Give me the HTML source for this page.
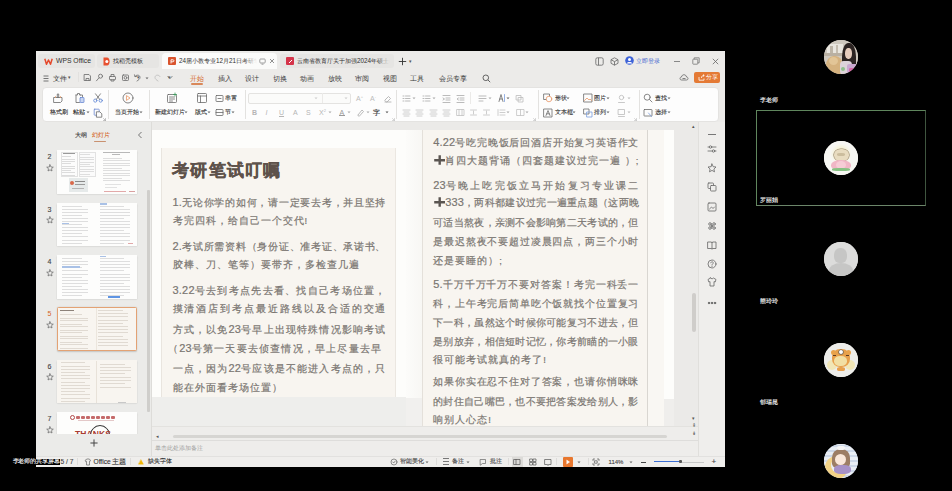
<!DOCTYPE html>
<html><head><meta charset="utf-8">
<style>
*{margin:0;padding:0;box-sizing:border-box}
html,body{width:952px;height:491px;overflow:hidden;background:#000;font-family:"Liberation Sans",sans-serif;}
.a{position:absolute}
#win{position:absolute;left:36px;top:51px;width:689px;height:416px;background:#ecebe9;overflow:hidden}
.t{position:absolute;white-space:nowrap;line-height:1}
.tab{position:absolute;top:3px;height:14px;border-radius:3px;background:#e6e5e3}
.tab .t{font-size:6.3px;color:#2e2e2e;top:4px}
.menu .t{font-size:6.5px;color:#3a3a3a;top:24.5px}
.rb{position:absolute;left:6px;top:36px;width:677px;height:35px;background:#fdfdfd;border-radius:4px;border:1px solid #e4e3e1}
.rl{font-size:6px;color:#333}
.ic{position:absolute;border:1px solid #555;border-radius:1px}
.sep{position:absolute;width:1px;background:#e2e1df}
/* slide */
#canvas{position:absolute;left:116px;top:71px;width:546px;height:318px;background:#ebeae8;overflow:hidden}
.page{position:absolute;background:#fcfbf8}
.card{position:absolute;background:#f8f5f0}
.ln{position:absolute;font-size:9.5px;line-height:1;color:#7a7571;-webkit-text-stroke:0.2px #7a7571;white-space:nowrap}
.j{text-align:justify;text-align-last:justify}
.ttl{position:absolute;font-size:16.5px;font-weight:bold;color:#5e524b;-webkit-text-stroke:0.35px #5e524b;white-space:nowrap;line-height:1;letter-spacing:1.3px}
.thumb{position:absolute;left:20px;width:80px;height:45px;background:#fbfaf8;box-shadow:0 0 1px rgba(0,0,0,.25)}
.num{position:absolute;left:11px;font-size:7px;color:#444}
.star{position:absolute;left:10px;font-size:8px;color:#555}
.rt{position:absolute;left:670px;font-size:8px;color:#555;line-height:1}
.sb .t{font-size:6px;color:#333;top:8px}
.av{position:absolute;width:34px;height:34px;border-radius:50%;overflow:hidden}
.nm{position:absolute;font-size:6px;color:#ddd;white-space:nowrap;line-height:1}
</style></head><body>

<div id="win">
  <!-- tab bar -->
  <div class="tab" style="left:2px;width:57px"><svg class="a" style="left:6px;top:3.5px" width="9" height="7" viewBox="0 0 9 7" fill="none" stroke="#e5482b" stroke-width="1.5" stroke-linejoin="round"><path d="M0.8 0.8 L2.5 6.2 L4.5 2 L6.5 6.2 L8.2 0.8"/></svg><span class="t" style="left:18px;top:3.6px;font-size:6.8px">WPS Office</span></div>
  <div class="tab" style="left:61px;width:62px"><svg class="a" style="left:6px;top:3px" width="8" height="9" viewBox="0 0 8 9"><path d="M0.5 0.5 H4 C7.5 0.5 7.5 8.5 4 8.5 H0.5z" fill="#e8502f"/><circle cx="3.8" cy="4.5" r="1.5" fill="#fff"/></svg><span class="t" style="left:16px">找稻壳模板</span></div>
  <div class="tab" style="left:126px;width:115px;background:#fbfbfa;border-radius:4px 4px 0 0;top:2px;height:16px"><span class="a" style="left:6px;top:4px;width:8px;height:8px;background:#d9532c;border-radius:1px"></span><svg class="a" style="left:8px;top:5.5px" width="5" height="5" viewBox="0 0 5 5"><path d="M1 4.5 V0.8 H3 C4.3 0.8 4.3 2.8 3 2.8 H1" fill="none" stroke="#fff" stroke-width="0.9"/></svg><div class="a" style="left:17px;top:4px;width:78px;height:9px;overflow:hidden"><span class="t" style="left:0;top:0.5px;font-size:6.3px;color:#2e2e2e">24届小教专业12月21日考研笔试叮嘱</span><div class="a" style="left:64px;top:0;width:14px;height:9px;background:linear-gradient(90deg,rgba(251,251,250,0),#fbfbfa)"></div></div><svg class="a" style="left:97px;top:5px" width="7" height="7" viewBox="0 0 7 7" fill="none" stroke="#888" stroke-width="0.8"><rect x="0.8" y="1" width="5.4" height="4" rx="0.8"/><path d="M2.5 6.2h2"/></svg><svg class="a" style="left:107px;top:5px" width="6" height="6" viewBox="0 0 6 6" fill="none" stroke="#777" stroke-width="0.8"><path d="M1 1L5 5M5 1L1 5"/></svg></div>
  <div class="tab" style="left:244px;width:114px"><span class="a" style="left:6px;top:3px;width:8px;height:8px;background:#d5344a;border-radius:1px"></span><svg class="a" style="left:7.5px;top:4.5px" width="5" height="5" viewBox="0 0 5 5"><path d="M1 4 L4 1" stroke="#fff" stroke-width="1"/></svg><div class="a" style="left:17px;top:3px;width:93px;height:9px;overflow:hidden"><span class="t" style="left:0;top:1px;font-size:6.3px;color:#2e2e2e">云南省教育厅关于加强2024年硕士研究生</span><div class="a" style="left:80px;top:0;width:13px;height:9px;background:linear-gradient(90deg,rgba(230,229,227,0),#e6e5e3)"></div></div></div>
  <svg class="a" style="left:362px;top:6px" width="9" height="9" viewBox="0 0 9 9" fill="none" stroke="#333" stroke-width="0.9"><path d="M4.5 0.8v7.4M0.8 4.5h7.4"/></svg>
  <span class="t" style="left:373px;top:8px;font-size:5px;color:#555">▾</span>

  <!-- window controls -->
  <svg class="a" style="left:558.5px;top:5.5px" width="9" height="9" viewBox="0 0 9 9" fill="none" stroke="#666" stroke-width="0.8"><rect x="0.8" y="0.8" width="7.4" height="7.4" rx="1.5"/><path d="M3.5 0.8v7.4"/></svg>
  <svg class="a" style="left:574px;top:5.5px" width="9" height="9" viewBox="0 0 9 9" fill="none" stroke="#666" stroke-width="0.8"><path d="M4.5 0.8 L8 2.7 V6.3 L4.5 8.2 L1 6.3 V2.7z M1 2.7 L4.5 4.6 L8 2.7 M4.5 4.6 V8.2"/></svg>
  <svg class="a" style="left:589px;top:5px" width="9" height="9" viewBox="0 0 9 9"><circle cx="4.5" cy="4.5" r="4.3" fill="#3e63d8"/><circle cx="4.5" cy="3.5" r="1.5" fill="#fff"/><path d="M1.8 7.4 C2.5 5.5 6.5 5.5 7.2 7.4" fill="#fff"/></svg>
  <span class="t" style="left:599.5px;top:6.8px;font-size:6.3px;color:#3b5fce">立即登录</span>
  <span class="a" style="left:638px;top:10px;width:6px;height:0.8px;background:#888"></span>
  <svg class="a" style="left:656px;top:6px" width="8" height="8" viewBox="0 0 8 8" fill="none" stroke="#777" stroke-width="0.8"><rect x="0.8" y="2.2" width="5" height="5" rx="0.6"/><path d="M2.2 2.2 V0.8 H7.2 V5.8 H5.8"/></svg>
  <svg class="a" style="left:675.5px;top:6.5px" width="7" height="7" viewBox="0 0 7 7" fill="none" stroke="#666" stroke-width="0.8"><path d="M0.8 0.8L6.2 6.2M6.2 0.8L0.8 6.2"/></svg>

  <!-- menu row -->
  <div class="menu">
    <svg class="a" style="left:7px;top:23.5px" width="6" height="7" viewBox="0 0 6 7" fill="none" stroke="#555" stroke-width="0.8"><path d="M0.5 1h5M0.5 3.5h5M0.5 6h5"/></svg>
    <span class="t" style="left:17px">文件</span><span class="t" style="left:32px;top:24px;font-size:5px;color:#555">▾</span>
    <span class="sep" style="left:42px;top:21px;height:10px"></span>
    <span class="t" style="left:101px;top:24px;font-size:5px;color:#555">▾</span>
    <span class="t" style="left:132px;top:24px;font-size:5px;color:#555">▾</span>
    <span class="t" style="left:154px;color:#d5651f">开始</span>
    <span class="a" style="left:154.6px;top:32px;width:12.5px;height:1.5px;background:#d9885a;border-radius:1px"></span>
    <span class="t" style="left:182px">插入</span>
    <span class="t" style="left:209px">设计</span>
    <span class="t" style="left:237px">切换</span>
    <span class="t" style="left:264px">动画</span>
    <span class="t" style="left:292px">放映</span>
    <span class="t" style="left:319px">审阅</span>
    <span class="t" style="left:347px">视图</span>
    <span class="t" style="left:374px">工具</span>
    <span class="t" style="left:403px">会员专享</span>
    <svg class="a" style="left:446px;top:22.5px" width="9" height="9" viewBox="0 0 9 9" fill="none" stroke="#555" stroke-width="0.9"><circle cx="3.8" cy="3.8" r="2.8"/><path d="M5.9 5.9 L8.2 8.2"/></svg>
    <svg class="a" style="left:643px;top:22px" width="10" height="8" viewBox="0 0 10 8" fill="none" stroke="#666" stroke-width="0.8"><path d="M2.5 7 C0.5 7 0.5 4 2.5 4 C2.8 1 7.2 1 7.5 4 C9.5 4 9.5 7 7.5 7z"/><path d="M3.5 5.5h3"/></svg>
    <div class="a" style="left:658px;top:20.8px;width:26px;height:11.5px;background:#e47a35;border-radius:2px"><svg class="a" style="left:3.5px;top:2.5px" width="7" height="7" viewBox="0 0 7 7" fill="none" stroke="#fff" stroke-width="0.8"><path d="M1 3 V6.2 H6 V4.5 M3.5 4 C3.5 2 4.5 1.5 6.2 1.5 M5 0.5 L6.2 1.5 L5 2.5"/></svg><span class="t" style="left:11.5px;top:2.6px;font-size:6.3px;color:#fff">分享</span></div>
  </div>

  <!-- ribbon -->
  <div class="rb" id="rb"></div>

  <!-- left panel -->
  <div id="lp" class="a" style="left:0;top:71px;width:115px;height:334px;background:#ebebe9">
    <span class="t" style="left:39px;top:11px;font-size:5.6px;color:#333;-webkit-text-stroke:0.1px #333">大纲</span>
    <span class="t" style="left:56.3px;top:11px;font-size:5.6px;color:#d5651f;-webkit-text-stroke:0.1px #d5651f">幻灯片</span>
    <span class="a" style="left:58px;top:18.5px;width:12px;height:1.3px;background:#c99170;border-radius:1px"></span>
    <svg class="a" style="left:101px;top:9px" width="6" height="8" viewBox="0 0 6 8" fill="none" stroke="#666" stroke-width="0.9"><path d="M4.5 1 L1.5 4 L4.5 7"/></svg>
    <span class="a" style="left:111px;top:68px;width:2.5px;height:222px;background:#cfcecb;border-radius:1px"></span>
    <span class="a" style="left:115px;top:0;width:1px;height:334px;background:#dddcd9"></span>
  </div>

  <!-- canvas -->
  <div id="canvas"></div>

  <!-- right toolbar -->
  <div id="rtb" class="a" style="left:662px;top:71px;width:27px;height:334px;background:#efeeec;border-left:1px solid #e0dfdc"></div>

  <!-- notes -->
  <div class="a" style="left:116px;top:389px;width:546px;height:16px;background:#eeedeb;border-top:1px solid #dedddb">
    <span class="t" style="left:3px;top:3.5px;font-size:6.4px;color:#9d9d9d">单击此处添加备注</span>
  </div>

  <!-- status bar -->
  <div class="sb a" style="left:0;top:405px;width:689px;height:11px;background:#efeeec;border-top:1px solid #e2e1df"></div>
</div>

<!-- slide layer (page coords) -->
<div class="a" style="left:152px;top:122px;width:546px;height:318px;overflow:hidden">
 <div class="a" style="left:-152px;top:-122px;width:952px;height:491px">
  <div class="a" style="left:152px;top:130px;width:522px;height:296px;background:#fdfdfb"></div>
  <div class="a" style="left:152px;top:397px;width:254px;height:29px;background:#eeeeec"></div>
  <div class="a" style="left:406px;top:130px;width:16px;height:296px;background:linear-gradient(90deg,#fcfcfa,#f8f7f4)"></div>
  <div class="a" style="left:406px;top:398px;width:16px;height:28px;background:#f1f0ee"></div>
  <div class="card" style="left:160.5px;top:148px;width:235.5px;height:249px;border-left:1px solid #e9e5df;border-right:1px solid #ebe7e1"></div>
  <div class="card" style="left:422px;top:130px;width:226px;height:296px;border-left:1px solid #e4e0da;border-right:1px solid #d9d6d1"></div>
  <div class="a" style="left:648px;top:130px;width:16px;height:296px;background:#f9f7f3"></div>
  <div class="a" style="left:664px;top:399px;width:10px;height:27px;background:#efeeec"></div>
  <div class="ttl" style="left:172px;top:162px">考研笔试叮嘱</div>
<div class="ln" style="left:172.5px;top:196.9px;letter-spacing:0.745px"><span style="font-size:11px;letter-spacing:0.2px">1.</span>无论你学的如何，请一定要去考，并且坚持</div>
<div class="ln" style="left:172.5px;top:215.6px;letter-spacing:1.000px">考完四科，给自己一个交代!</div>
<div class="ln" style="left:172.5px;top:241.0px;letter-spacing:0.745px"><span style="font-size:11px;letter-spacing:0.2px">2.</span>考试所需资料（身份证、准考证、承诺书、</div>
<div class="ln" style="left:172.5px;top:260.0px;letter-spacing:1.000px">胶棒、刀、笔等）要带齐，多检查几遍</div>
<div class="ln" style="left:172.5px;top:284.8px;letter-spacing:1.298px"><span style="font-size:11px;letter-spacing:0.2px">3.22</span>号去到考点先去看、找自己考场位置，</div>
<div class="ln" style="left:172.5px;top:304.3px;letter-spacing:1.940px">摸清酒店到考点最近路线以及合适的交通</div>
<div class="ln" style="left:172.5px;top:324.1px;letter-spacing:1.196px">方式，以免<span style="font-size:11px;letter-spacing:0.2px">23</span>号早上出现特殊情况影响考试</div>
<div class="ln" style="left:172.5px;top:342.7px;letter-spacing:1.197px"><span style="margin-left:-4.5px">（</span><span style="font-size:11px;letter-spacing:0.2px">23</span>号第一天要去侦查情况，早上尽量去早</div>
<div class="ln" style="left:172.5px;top:363.1px;letter-spacing:1.196px">一点，因为<span style="font-size:11px;letter-spacing:0.2px">22</span>号应该是不能进入考点的，只</div>
<div class="ln" style="left:172.5px;top:383.1px;letter-spacing:1.000px">能在外面看考场位置）</div>
<div class="ln" style="left:433.2px;top:137.0px;letter-spacing:0.811px"><span style="font-size:11px;letter-spacing:0.2px">4.22</span>号吃完晚饭后回酒店开始复习英语作文</div>
<div class="ln" style="left:433.2px;top:155.2px;letter-spacing:1.000px"><svg width="11.5" height="10" viewBox="0 0 11.5 10" style="vertical-align:-1.2px;margin-left:0.5px;position:relative;top:-0.5px"><path d="M0.2 5.2h11M5.7 0.2v9.6" stroke="#5a5551" stroke-width="2.4"/></svg>肖四大题背诵（四套题建议过完一遍 ）;</div>
<div class="ln" style="left:433.2px;top:179.5px;letter-spacing:2.170px"><span style="font-size:11px;letter-spacing:0.2px">23</span>号晚上吃完饭立马开始复习专业课二</div>
<div class="ln" style="left:433.2px;top:197.2px;letter-spacing:0.295px"><svg width="11.5" height="10" viewBox="0 0 11.5 10" style="vertical-align:-1.2px;margin-left:0.5px;position:relative;top:-0.5px"><path d="M0.2 5.2h11M5.7 0.2v9.6" stroke="#5a5551" stroke-width="2.4"/></svg><span style="font-size:11px;letter-spacing:0.2px">333</span>，两科都建议过完一遍重点题（这两晚</div>
<div class="ln" style="left:433.2px;top:217.5px;letter-spacing:0.273px">可适当熬夜，亲测不会影响第二天考试的，但</div>
<div class="ln" style="left:433.2px;top:236.5px;letter-spacing:0.844px">是最迟熬夜不要超过凌晨四点，两三个小时</div>
<div class="ln" style="left:433.2px;top:255.5px;letter-spacing:1.000px">还是要睡的）;</div>
<div class="ln" style="left:433.2px;top:279.4px;letter-spacing:0.919px"><span style="font-size:11px;letter-spacing:0.2px">5.</span>千万千万千万不要对答案！考完一科丢一</div>
<div class="ln" style="left:433.2px;top:298.5px;letter-spacing:0.844px">科，上午考完后简单吃个饭就找个位置复习</div>
<div class="ln" style="left:433.2px;top:317.5px;letter-spacing:0.273px">下一科，虽然这个时候你可能复习不进去，但</div>
<div class="ln" style="left:433.2px;top:336.5px;letter-spacing:0.273px">是别放弃，相信短时记忆，你考前瞄的一小眼</div>
<div class="ln" style="left:433.2px;top:354.5px;letter-spacing:1.000px">很可能考试就真的考了!</div>
<div class="ln" style="left:433.2px;top:377.1px;letter-spacing:0.844px">如果你实在忍不住对了答案，也请你悄咪咪</div>
<div class="ln" style="left:433.2px;top:396.5px;letter-spacing:0.273px">的封住自己嘴巴，也不要把答案发给别人，影</div>
<div class="ln" style="left:433.2px;top:415.2px;letter-spacing:1.000px">响别人心态!</div>
  <div class="a" style="left:152px;top:426px;width:546px;height:14px;background:#eeedeb;border-top:1px solid #e3e2df"></div>
  <div class="a" style="left:173px;top:435px;width:494px;height:3.2px;background:#d6d5d2;border-radius:2px"></div>
  <span class="t" style="left:156px;top:434px;font-size:5px;color:#555">◂</span>
  <span class="t" style="left:692px;top:124px;font-size:5px;color:#555">▴</span>
  <div class="a" style="left:692px;top:293px;width:4px;height:39px;background:#cfcdca;border-radius:2px"></div>
  <span class="t" style="left:692px;top:416px;font-size:5px;color:#555">▾</span>
  <span class="t" style="left:692px;top:423px;font-size:5px;color:#555">⇞</span>
  <span class="t" style="left:692px;top:431px;font-size:5px;color:#555">⇟</span>
 </div>
</div>

<!-- participants -->
<div class="a" style="left:756px;top:110.3px;width:170px;height:95.5px;border:1.5px solid #5f865d;border-right-color:#3f553f;border-bottom-color:#6c866a"></div>
<span class="nm" style="left:759.5px;top:97.4px;font-size:6px;color:#f4f4f4;-webkit-text-stroke:0.15px #f4f4f4">李老师</span>
<span class="nm" style="left:759.5px;top:197.2px;font-size:6px;color:#f4f4f4;-webkit-text-stroke:0.15px #f4f4f4">罗丽娟</span>
<span class="nm" style="left:759.5px;top:298.0px;font-size:6px;color:#f4f4f4;-webkit-text-stroke:0.15px #f4f4f4">熊玲玲</span>
<span class="nm" style="left:759.5px;top:399.0px;font-size:6px;color:#f4f4f4;-webkit-text-stroke:0.15px #f4f4f4">郁瑞昆</span>
<div class="av" style="left:823.5px;top:40.3px;width:34px;height:34px;background:#cfc9bf"><div class="a" style="left:0;top:0;width:34px;height:34px;filter:blur(0.7px)"><div class="a" style="left:-2px;top:-2px;width:38px;height:38px;background:#cfc9bf;border-radius:0;"></div><div class="a" style="left:3px;top:4px;width:16px;height:9px;background:#e9e6df;border-radius:0;"></div><div class="a" style="left:6px;top:6px;width:3px;height:7px;background:#bdb5a8;border-radius:0;"></div><div class="a" style="left:12px;top:5px;width:2px;height:8px;background:#c5bdb0;border-radius:0;"></div><div class="a" style="left:0px;top:13px;width:20px;height:3px;background:#b9b0a2;border-radius:0;"></div><div class="a" style="left:2px;top:16px;width:17px;height:20px;background:#d5b27f;border-radius:45% 45% 20% 20%;"></div><div class="a" style="left:5px;top:17px;width:9px;height:8px;background:#e2c597;border-radius:50%;"></div><div class="a" style="left:18px;top:3px;width:14px;height:30px;background:#2c2422;border-radius:45% 45% 20% 20%;"></div><div class="a" style="left:21px;top:8px;width:7px;height:11px;background:#e6cdbd;border-radius:45%;"></div><div class="a" style="left:16px;top:21px;width:12px;height:14px;background:#ddd3d9;border-radius:30%;"></div><div class="a" style="left:23px;top:24px;width:11px;height:10px;background:#c9a8cf;border-radius:20%;"></div><div class="a" style="left:25px;top:28px;width:8px;height:6px;background:#d666a6;border-radius:20%;"></div><div class="a" style="left:17px;top:27px;width:4px;height:4px;background:#8fc08c;border-radius:50%;"></div></div></div>
<div class="av" style="left:823.5px;top:141.3px;width:34px;height:34px;background:#f7f7f3"><div class="a" style="left:0;top:0;width:34px;height:34px;filter:blur(0.7px)"><div class="a" style="left:-2px;top:-2px;width:38px;height:38px;background:#f7f7f3;border-radius:0;"></div><div class="a" style="left:6px;top:3px;width:22px;height:20px;background:radial-gradient(circle,#f5edb0 0%,#f7f7f3 70%);border-radius:50%;"></div><div class="a" style="left:10px;top:8px;width:15px;height:12px;background:#e8dcc0;border-radius:45%;box-shadow:0 0 0 0.6px #9a8a70"></div><div class="a" style="left:13px;top:12px;width:8px;height:3px;background:#cbbd9d;border-radius:40%;"></div><div class="a" style="left:7px;top:19px;width:20px;height:10px;background:#f0b6c6;border-radius:50% 50% 40% 40%;"></div><div class="a" style="left:12px;top:20px;width:10px;height:8px;background:#f6ccd6;border-radius:50%;"></div><div class="a" style="left:8px;top:27px;width:18px;height:2.5px;background:#86c283;border-radius:40%;"></div></div></div>
<div class="av" style="left:823.5px;top:241.5px;width:34px;height:34px;background:#dcdcdb"><div class="a" style="left:0;top:0;width:34px;height:34px;filter:blur(0.7px)"><div class="a" style="left:-2px;top:-2px;width:38px;height:38px;background:#dcdcdb;border-radius:0;"></div><div class="a" style="left:10.5px;top:6px;width:13px;height:15px;background:#c6c6c5;border-radius:45% 45% 40% 40%;"></div><div class="a" style="left:5px;top:21px;width:24px;height:16px;background:#c6c6c5;border-radius:50% 50% 0 0;"></div></div></div>
<div class="av" style="left:823.5px;top:342.7px;width:34px;height:34px;background:#ededea"><div class="a" style="left:0;top:0;width:34px;height:34px;filter:blur(0.7px)"><div class="a" style="left:-2px;top:-2px;width:38px;height:38px;background:#ededea;border-radius:0;"></div><div class="a" style="left:3px;top:17px;width:10px;height:10px;background:#f1e6b6;border-radius:50%;"></div><div class="a" style="left:21px;top:17px;width:10px;height:10px;background:#f1e6b6;border-radius:50%;"></div><div class="a" style="left:8px;top:6px;width:18px;height:18px;background:#e7a04c;border-radius:45%;"></div><div class="a" style="left:7px;top:7px;width:5px;height:5px;background:#e9a24a;border-radius:50%;"></div><div class="a" style="left:22px;top:7px;width:5px;height:5px;background:#e9a24a;border-radius:50%;"></div><div class="a" style="left:10.5px;top:13.5px;width:13px;height:10px;background:#f2dfa3;border-radius:45%;"></div><div class="a" style="left:15px;top:7.5px;width:4px;height:4px;background:#fff;border-radius:50%;box-shadow:0 0 0 0.6px #555"></div><div class="a" style="left:9px;top:12px;width:3px;height:1px;background:#5a3a20;border-radius:0;"></div><div class="a" style="left:22px;top:12px;width:3px;height:1px;background:#5a3a20;border-radius:0;"></div><div class="a" style="left:13px;top:24px;width:8px;height:4px;background:#e7a04c;border-radius:40%;"></div></div></div>
<div class="av" style="left:823.5px;top:443.5px;width:34px;height:34px;background:#e3e9f2"><div class="a" style="left:0;top:0;width:34px;height:34px;filter:blur(0.7px)"><div class="a" style="left:-2px;top:-2px;width:38px;height:38px;background:repeating-linear-gradient(180deg,#e9eef5 0 3px,#cdd8e8 3px 5px);border-radius:0;"></div><div class="a" style="left:1px;top:12px;width:23px;height:23px;background:#f2d287;border-radius:50%;"></div><div class="a" style="left:7px;top:14px;width:15px;height:15px;background:#e9eef5;border-radius:50%;"></div><div class="a" style="left:8px;top:5px;width:18px;height:19px;background:#9d7e65;border-radius:45% 45% 25% 25%;"></div><div class="a" style="left:11.5px;top:10px;width:11px;height:11px;background:#fae8da;border-radius:50%;"></div><div class="a" style="left:10px;top:21px;width:17px;height:9px;background:#a792c8;border-radius:40%;"></div><div class="a" style="left:13px;top:2.5px;width:8px;height:3.5px;background:#f6f6f6;border-radius:2px;"></div></div></div>
<svg class="a" style="left:82.80px;top:73.20px" width="9" height="9" viewBox="0 0 9 9" fill="none" stroke="#6a6a6a" stroke-width="0.8" stroke-linecap="round" stroke-linejoin="round"><path d="M1.5 1.5h4.5l1.5 1.5v4.5h-6z"/><path d="M3 7.5v-2h3v2"/></svg>
<svg class="a" style="left:95.10px;top:73.20px" width="9" height="9" viewBox="0 0 9 9" fill="none" stroke="#6a6a6a" stroke-width="0.8" stroke-linecap="round" stroke-linejoin="round"><circle cx="5.5" cy="3.2" r="2"/><path d="M4 4.8 L1.5 7.8"/></svg>
<svg class="a" style="left:107.80px;top:73.20px" width="9" height="9" viewBox="0 0 9 9" fill="none" stroke="#6a6a6a" stroke-width="0.8" stroke-linecap="round" stroke-linejoin="round"><rect x="1.5" y="3.5" width="6" height="3.2" rx="0.6"/><path d="M3 3.5v-2h3v2M3 6.7v1.3h3v-1.3"/></svg>
<svg class="a" style="left:120.50px;top:73.20px" width="9" height="9" viewBox="0 0 9 9" fill="none" stroke="#6a6a6a" stroke-width="0.8" stroke-linecap="round" stroke-linejoin="round"><rect x="1.5" y="2" width="6" height="5.5" rx="0.8"/><circle cx="4.5" cy="4.8" r="1.4"/></svg>
<svg class="a" style="left:133.20px;top:73.20px" width="9" height="9" viewBox="0 0 9 9" fill="none" stroke="#6a6a6a" stroke-width="0.8" stroke-linecap="round" stroke-linejoin="round"><path d="M2 3.5 C3 1.5 7 1.5 7 4.5 C7 6 5.5 7 4 8"/><path d="M1.5 1.8 L2 3.7 L3.8 3.3"/></svg>
<svg class="a" style="left:144.50px;top:76.50px" width="4" height="3" viewBox="0 0 4 3"><path d="M0.5 0.5 L3.5 0.5 L2 2.3z" fill="#666"/></svg>
<svg class="a" style="left:152.80px;top:73.20px" width="9" height="9" viewBox="0 0 9 9" fill="none" stroke="#bbb" stroke-width="0.8" stroke-linecap="round" stroke-linejoin="round"><path d="M7 3.5 C6 1.5 2 1.5 2 4.5 C2 6 3.5 7 5 8"/></svg>
<svg class="a" style="left:167.00px;top:75.20px" width="6" height="5" viewBox="0 0 6 5" fill="none" stroke="#666" stroke-width="0.9" stroke-linecap="round" stroke-linejoin="round"><path d="M1 1.5 L3 3.5 L5 1.5"/></svg>
<svg class="a" style="left:52.00px;top:92.00px" width="12" height="12" viewBox="0 0 12 12" fill="none" stroke="#6a6a6a" stroke-width="0.8" stroke-linecap="round" stroke-linejoin="round"><path d="M2 5.5 H10 V9 L8.5 10.5 H2z"/><path d="M5.3 5.5 V2 H6.7 V5.5"/><path d="M3.5 5.5 V4.5 M8.5 5.5 V4.5" stroke="#e8a070"/></svg>
<span class="t" style="left:50px;top:109.70px;font-size:5.8px;color:#333;-webkit-text-stroke:0.12px #333;">格式刷</span>
<svg class="a" style="left:74.00px;top:92.00px" width="12" height="12" viewBox="0 0 12 12" fill="none" stroke="#6a6a6a" stroke-width="0.8" stroke-linecap="round" stroke-linejoin="round"><path d="M6.5 3 H8.5 V5 M2 3 V10.5 H5.5"/><path d="M2 3 H3.5 V1.5 H5.5 V3 H6.5"/><rect x="6" y="5.5" width="4" height="5" rx="0.5" fill="#c9d6f2" stroke="#6a88d0"/></svg>
<span class="t" style="left:73px;top:109.70px;font-size:5.8px;color:#333;-webkit-text-stroke:0.12px #333;">粘贴</span>
<svg class="a" style="left:85.50px;top:111.40px" width="4" height="3" viewBox="0 0 4 3"><path d="M0.5 0.5 L3.5 0.5 L2 2.3z" fill="#666"/></svg>
<svg class="a" style="left:93.00px;top:93.00px" width="10" height="10" viewBox="0 0 10 10" fill="none" stroke="#6a6a6a" stroke-width="0.8" stroke-linecap="round" stroke-linejoin="round"><circle cx="2.3" cy="7.6" r="1.6" stroke="#5f86d6"/><circle cx="7.7" cy="7.6" r="1.6" stroke="#5f86d6"/><path d="M3.3 6.4 L7.5 0.8M6.7 6.4 L2.5 0.8"/></svg>
<svg class="a" style="left:93.00px;top:107.60px" width="10" height="10" viewBox="0 0 10 10" fill="none" stroke="#6a6a6a" stroke-width="0.8" stroke-linecap="round" stroke-linejoin="round"><rect x="1.2" y="1.2" width="5" height="6" rx="0.5" stroke="#6a88d0"/><path d="M3.8 3.8 H6.8 L8.8 5.8 V9.2 H3.8z" fill="#fdfdfd"/></svg>
<svg class="a" style="left:103.10px;top:117.80px" width="3" height="3" viewBox="0 0 3 3" fill="none" stroke="#999" stroke-width="0.6" stroke-linecap="round" stroke-linejoin="round"><path d="M0.5 0.5 L2.5 2.5 M2.5 0.5v2h-2"/></svg>
<div class="a" style="left:107.5px;top:90px;width:1px;height:29px;background:#e3e2e0"></div>
<svg class="a" style="left:121.70px;top:92.00px" width="12" height="12" viewBox="0 0 12 12" fill="none" stroke="#6a6a6a" stroke-width="0.8" stroke-linecap="round" stroke-linejoin="round"><circle cx="6" cy="6" r="5" stroke="#666"/><path d="M4.8 3.8 L8 6 L4.8 8.2z" stroke="#e89868"/></svg>
<span class="t" style="left:114.5px;top:109.70px;font-size:5.8px;color:#333;-webkit-text-stroke:0.12px #333;">当页开始</span>
<svg class="a" style="left:139.00px;top:111.40px" width="4" height="3" viewBox="0 0 4 3"><path d="M0.5 0.5 L3.5 0.5 L2 2.3z" fill="#666"/></svg>
<div class="a" style="left:149px;top:90px;width:1px;height:29px;background:#e3e2e0"></div>
<svg class="a" style="left:166.00px;top:92.00px" width="12" height="12" viewBox="0 0 12 12" fill="none" stroke="#6a6a6a" stroke-width="0.8" stroke-linecap="round" stroke-linejoin="round"><rect x="1.5" y="2.5" width="9" height="8" rx="0.8"/><path d="M3.5 5h5M3.5 7h5M3.5 9h3"/><path d="M9 1v3M7.5 2.5h3" stroke="#3b9a5a"/></svg>
<span class="t" style="left:155px;top:109.70px;font-size:5.8px;color:#333;-webkit-text-stroke:0.12px #333;">新建幻灯片</span>
<svg class="a" style="left:184.00px;top:111.40px" width="4" height="3" viewBox="0 0 4 3"><path d="M0.5 0.5 L3.5 0.5 L2 2.3z" fill="#666"/></svg>
<svg class="a" style="left:196.00px;top:92.00px" width="12" height="12" viewBox="0 0 12 12" fill="none" stroke="#6a6a6a" stroke-width="0.8" stroke-linecap="round" stroke-linejoin="round"><rect x="1.5" y="1.5" width="9" height="9" rx="0.8"/><path d="M1.5 4h9M4.5 4v6.5"/></svg>
<span class="t" style="left:194.5px;top:109.70px;font-size:5.8px;color:#333;-webkit-text-stroke:0.12px #333;">版式</span>
<svg class="a" style="left:206.50px;top:111.40px" width="4" height="3" viewBox="0 0 4 3"><path d="M0.5 0.5 L3.5 0.5 L2 2.3z" fill="#666"/></svg>
<svg class="a" style="left:214.50px;top:93.50px" width="9" height="9" viewBox="0 0 9 9" fill="none" stroke="#6a6a6a" stroke-width="0.8" stroke-linecap="round" stroke-linejoin="round"><rect x="1" y="1.5" width="7" height="6" rx="0.6"/><path d="M3 4.5h3"/></svg>
<span class="t" style="left:224.5px;top:96.40px;font-size:5.8px;color:#333;-webkit-text-stroke:0.12px #333;">串置</span>
<svg class="a" style="left:214.50px;top:108.10px" width="9" height="9" viewBox="0 0 9 9" fill="none" stroke="#6a6a6a" stroke-width="0.8" stroke-linecap="round" stroke-linejoin="round"><rect x="1" y="1.5" width="7" height="6" rx="0.6"/><path d="M1 4.5h7"/></svg>
<span class="t" style="left:225px;top:109.70px;font-size:5.8px;color:#333;-webkit-text-stroke:0.12px #333;">节</span>
<svg class="a" style="left:231.00px;top:111.40px" width="4" height="3" viewBox="0 0 4 3"><path d="M0.5 0.5 L3.5 0.5 L2 2.3z" fill="#666"/></svg>
<div class="a" style="left:245px;top:90px;width:1px;height:29px;background:#e3e2e0"></div>
<div class="a" style="left:248px;top:92.5px;width:102.5px;height:11px;border:1px solid #e4e3e1;border-radius:2px;background:#fbfbfa"></div>
<div class="a" style="left:322px;top:93px;width:1px;height:10px;background:#ebeae8"></div>
<svg class="a" style="left:314.00px;top:96.80px" width="4" height="3" viewBox="0 0 4 3"><path d="M0.5 0.5 L3.5 0.5 L2 2.3z" fill="#ccc"/></svg>
<svg class="a" style="left:344.00px;top:96.80px" width="4" height="3" viewBox="0 0 4 3"><path d="M0.5 0.5 L3.5 0.5 L2 2.3z" fill="#ccc"/></svg>
<span class="t" style="left:356px;top:94.50px;font-size:7px;color:#bbb;">A<sup style="font-size:4px">+</sup></span>
<span class="t" style="left:370px;top:94.50px;font-size:7px;color:#bbb;">A<sup style="font-size:4px">-</sup></span>
<svg class="a" style="left:382.50px;top:93.50px" width="9" height="9" viewBox="0 0 9 9" fill="none" stroke="#aaa" stroke-width="0.8" stroke-linecap="round" stroke-linejoin="round"><path d="M2 6 L5.5 2.5 L7.5 4.5 L4 8z"/><path d="M2 8h6"/></svg>
<span class="t" style="left:252px;top:109.10px;font-size:7px;color:#b5b5b5;"><b>B</b></span>
<span class="t" style="left:265.5px;top:109.10px;font-size:7px;color:#b5b5b5;"><i>I</i></span>
<span class="t" style="left:279px;top:109.10px;font-size:7px;color:#b5b5b5;"><u>U</u></span>
<span class="t" style="left:293px;top:109.10px;font-size:7px;color:#b5b5b5;">A</span>
<span class="t" style="left:306px;top:109.10px;font-size:7px;color:#b5b5b5;">S</span>
<span class="t" style="left:319px;top:109.10px;font-size:7px;color:#b5b5b5;">X<sup style="font-size:4px">2</sup></span>
<svg class="a" style="left:328.00px;top:111.40px" width="4" height="3" viewBox="0 0 4 3"><path d="M0.5 0.5 L3.5 0.5 L2 2.3z" fill="#aaa"/></svg>
<span class="t" style="left:339.5px;top:109.10px;font-size:7px;color:#999;">A</span>
<div class="a" style="left:339px;top:115px;width:6px;height:1px;background:#999"></div>
<svg class="a" style="left:347.00px;top:111.40px" width="4" height="3" viewBox="0 0 4 3"><path d="M0.5 0.5 L3.5 0.5 L2 2.3z" fill="#aaa"/></svg>
<svg class="a" style="left:355.50px;top:108.10px" width="9" height="9" viewBox="0 0 9 9" fill="none" stroke="#aaa" stroke-width="0.8" stroke-linecap="round" stroke-linejoin="round"><path d="M2 7 L6 2 L7.5 3.5 L3.5 8z"/></svg>
<svg class="a" style="left:366.00px;top:111.40px" width="4" height="3" viewBox="0 0 4 3"><path d="M0.5 0.5 L3.5 0.5 L2 2.3z" fill="#aaa"/></svg>
<span class="t" style="left:373px;top:109.10px;font-size:7px;color:#555;"><b>字</b></span>
<svg class="a" style="left:385.00px;top:111.40px" width="4" height="3" viewBox="0 0 4 3"><path d="M0.5 0.5 L3.5 0.5 L2 2.3z" fill="#555"/></svg>
<svg class="a" style="left:391.50px;top:117.80px" width="3" height="3" viewBox="0 0 3 3" fill="none" stroke="#bbb" stroke-width="0.6" stroke-linecap="round" stroke-linejoin="round"><path d="M0.5 0.5 L2.5 2.5 M2.5 0.5v2h-2"/></svg>
<div class="a" style="left:396px;top:90px;width:1px;height:29px;background:#e3e2e0"></div>
<svg class="a" style="left:402.20px;top:93.50px" width="9" height="9" viewBox="0 0 9 9" fill="none" stroke="#aaa" stroke-width="0.8" stroke-linecap="round" stroke-linejoin="round"><path d="M1 2h1M3.5 2h4.5M1 4.5h1M3.5 4.5h4.5M1 7h1M3.5 7h4.5"/></svg>
<svg class="a" style="left:412.00px;top:96.80px" width="4" height="3" viewBox="0 0 4 3"><path d="M0.5 0.5 L3.5 0.5 L2 2.3z" fill="#aaa"/></svg>
<svg class="a" style="left:422.10px;top:93.50px" width="9" height="9" viewBox="0 0 9 9" fill="none" stroke="#aaa" stroke-width="0.8" stroke-linecap="round" stroke-linejoin="round"><path d="M1 2h1M3.5 2h4.5M1 4.5h1M3.5 4.5h4.5M1 7h1M3.5 7h4.5"/></svg>
<svg class="a" style="left:432.00px;top:96.80px" width="4" height="3" viewBox="0 0 4 3"><path d="M0.5 0.5 L3.5 0.5 L2 2.3z" fill="#aaa"/></svg>
<svg class="a" style="left:441.50px;top:93.50px" width="9" height="9" viewBox="0 0 9 9" fill="none" stroke="#aaa" stroke-width="0.8" stroke-linecap="round" stroke-linejoin="round"><path d="M1 1.5h7M4 4h4M4 6h4M1 8.5h7M1 4l1.5 1-1.5 1"/></svg>
<svg class="a" style="left:455.50px;top:93.50px" width="9" height="9" viewBox="0 0 9 9" fill="none" stroke="#aaa" stroke-width="0.8" stroke-linecap="round" stroke-linejoin="round"><path d="M1 1.5h7M4 4h4M4 6h4M1 8.5h7M2.5 4l-1.5 1 1.5 1"/></svg>
<div class="a" style="left:470px;top:92px;width:1px;height:12px;background:#ebeae8"></div>
<svg class="a" style="left:477.50px;top:93.50px" width="9" height="9" viewBox="0 0 9 9" fill="none" stroke="#aaa" stroke-width="0.8" stroke-linecap="round" stroke-linejoin="round"><path d="M1 2h7M1 4.5h7M1 7h4"/></svg>
<svg class="a" style="left:488.00px;top:96.80px" width="4" height="3" viewBox="0 0 4 3"><path d="M0.5 0.5 L3.5 0.5 L2 2.3z" fill="#aaa"/></svg>
<svg class="a" style="left:496.50px;top:93.00px" width="9" height="10" viewBox="0 0 9 10" fill="none" stroke="#666" stroke-width="0.8" stroke-linecap="round" stroke-linejoin="round"><path d="M2 8.5 L4 1.5 L6 8.5M2.8 6h2.4"/><path d="M7.5 1.5v7" stroke="#7b9ede"/></svg>
<svg class="a" style="left:506.00px;top:96.80px" width="4" height="3" viewBox="0 0 4 3"><path d="M0.5 0.5 L3.5 0.5 L2 2.3z" fill="#666"/></svg>
<svg class="a" style="left:514.90px;top:93.50px" width="9" height="9" viewBox="0 0 9 9" fill="none" stroke="#bbb" stroke-width="0.8" stroke-linecap="round" stroke-linejoin="round"><rect x="1.5" y="1.5" width="4.5" height="4.5"/><rect x="3.5" y="3.5" width="4.5" height="4.5"/></svg>
<svg class="a" style="left:401.50px;top:108.10px" width="9" height="9" viewBox="0 0 9 9" fill="none" stroke="#c2c2c2" stroke-width="0.8" stroke-linecap="round" stroke-linejoin="round"><path d="M1 2h7M2 4h5M1 6h7M2 8h5"/></svg>
<svg class="a" style="left:415.00px;top:108.10px" width="9" height="9" viewBox="0 0 9 9" fill="none" stroke="#c2c2c2" stroke-width="0.8" stroke-linecap="round" stroke-linejoin="round"><path d="M1 2h7M2 4h5M1 6h7M2 8h5"/></svg>
<svg class="a" style="left:428.50px;top:108.10px" width="9" height="9" viewBox="0 0 9 9" fill="none" stroke="#c2c2c2" stroke-width="0.8" stroke-linecap="round" stroke-linejoin="round"><path d="M1 2h7M2 4h5M1 6h7M2 8h5"/></svg>
<svg class="a" style="left:442.00px;top:108.10px" width="9" height="9" viewBox="0 0 9 9" fill="none" stroke="#c2c2c2" stroke-width="0.8" stroke-linecap="round" stroke-linejoin="round"><path d="M1 2h7M2 4h5M1 6h7M2 8h5"/></svg>
<svg class="a" style="left:455.50px;top:108.10px" width="9" height="9" viewBox="0 0 9 9" fill="none" stroke="#c2c2c2" stroke-width="0.8" stroke-linecap="round" stroke-linejoin="round"><rect x="1" y="1.5" width="7" height="6"/><path d="M3 1.5v6M6 1.5v6"/></svg>
<svg class="a" style="left:468.50px;top:108.10px" width="9" height="9" viewBox="0 0 9 9" fill="none" stroke="#c2c2c2" stroke-width="0.8" stroke-linecap="round" stroke-linejoin="round"><path d="M1.5 2h6M1.5 7h6M4.5 3v3"/></svg>
<svg class="a" style="left:482.10px;top:108.10px" width="9" height="9" viewBox="0 0 9 9" fill="none" stroke="#c2c2c2" stroke-width="0.8" stroke-linecap="round" stroke-linejoin="round"><path d="M1.5 2h6M1.5 7h6M4.5 3v3"/></svg>
<svg class="a" style="left:496.50px;top:108.10px" width="9" height="9" viewBox="0 0 9 9" fill="none" stroke="#c2c2c2" stroke-width="0.8" stroke-linecap="round" stroke-linejoin="round"><path d="M1 1.5v6M3 2h5M3 4.5h5M3 7h5"/></svg>
<svg class="a" style="left:506.00px;top:111.40px" width="4" height="3" viewBox="0 0 4 3"><path d="M0.5 0.5 L3.5 0.5 L2 2.3z" fill="#aaa"/></svg>
<svg class="a" style="left:516.20px;top:108.10px" width="9" height="9" viewBox="0 0 9 9" fill="none" stroke="#c2c2c2" stroke-width="0.8" stroke-linecap="round" stroke-linejoin="round"><rect x="1" y="1.5" width="7" height="6"/><path d="M4.5 1.5v6"/></svg>
<svg class="a" style="left:525.00px;top:111.40px" width="4" height="3" viewBox="0 0 4 3"><path d="M0.5 0.5 L3.5 0.5 L2 2.3z" fill="#aaa"/></svg>
<svg class="a" style="left:532.50px;top:117.80px" width="3" height="3" viewBox="0 0 3 3" fill="none" stroke="#bbb" stroke-width="0.6" stroke-linecap="round" stroke-linejoin="round"><path d="M0.5 0.5 L2.5 2.5 M2.5 0.5v2h-2"/></svg>
<div class="a" style="left:538px;top:90px;width:1px;height:29px;background:#e3e2e0"></div>
<svg class="a" style="left:543.30px;top:93.00px" width="10" height="10" viewBox="0 0 10 10" fill="none" stroke="#6a6a6a" stroke-width="0.8" stroke-linecap="round" stroke-linejoin="round"><rect x="1" y="1" width="5.5" height="5.5"/><circle cx="6" cy="6" r="2.8" fill="#fdfdfd" stroke="#e89868"/></svg>
<span class="t" style="left:554.5px;top:96.40px;font-size:5.8px;color:#333;-webkit-text-stroke:0.12px #333;">形状</span>
<svg class="a" style="left:566.00px;top:96.80px" width="4" height="3" viewBox="0 0 4 3"><path d="M0.5 0.5 L3.5 0.5 L2 2.3z" fill="#666"/></svg>
<svg class="a" style="left:543.30px;top:107.60px" width="10" height="10" viewBox="0 0 10 10" fill="none" stroke="#6a6a6a" stroke-width="0.8" stroke-linecap="round" stroke-linejoin="round"><rect x="1" y="1" width="8" height="8"/><path d="M3 7.5 L5 2.5 L7 7.5M3.8 5.8h2.4"/></svg>
<span class="t" style="left:554.5px;top:109.70px;font-size:5.8px;color:#333;-webkit-text-stroke:0.12px #333;">文本框</span>
<svg class="a" style="left:572.00px;top:111.40px" width="4" height="3" viewBox="0 0 4 3"><path d="M0.5 0.5 L3.5 0.5 L2 2.3z" fill="#666"/></svg>
<svg class="a" style="left:582.70px;top:93.00px" width="10" height="10" viewBox="0 0 10 10" fill="none" stroke="#6a6a6a" stroke-width="0.8" stroke-linecap="round" stroke-linejoin="round"><rect x="1" y="1" width="8" height="8"/><path d="M1.5 7.5 L4 5 L6 7 L7 6 L8.5 7.5" stroke="#e89868"/></svg>
<span class="t" style="left:593.5px;top:96.40px;font-size:5.8px;color:#333;-webkit-text-stroke:0.12px #333;">图片</span>
<svg class="a" style="left:605.50px;top:96.80px" width="4" height="3" viewBox="0 0 4 3"><path d="M0.5 0.5 L3.5 0.5 L2 2.3z" fill="#666"/></svg>
<svg class="a" style="left:582.70px;top:107.60px" width="10" height="10" viewBox="0 0 10 10" fill="none" stroke="#6a6a6a" stroke-width="0.8" stroke-linecap="round" stroke-linejoin="round"><rect x="1" y="1" width="5" height="5"/><rect x="4" y="4" width="5" height="5" stroke="#7b9ede"/></svg>
<span class="t" style="left:593.5px;top:109.70px;font-size:5.8px;color:#333;-webkit-text-stroke:0.12px #333;">排列</span>
<svg class="a" style="left:605.50px;top:111.40px" width="4" height="3" viewBox="0 0 4 3"><path d="M0.5 0.5 L3.5 0.5 L2 2.3z" fill="#666"/></svg>
<svg class="a" style="left:616.80px;top:93.50px" width="9" height="9" viewBox="0 0 9 9" fill="none" stroke="#bbb" stroke-width="0.8" stroke-linecap="round" stroke-linejoin="round"><circle cx="4.5" cy="3.5" r="2.2"/><path d="M1.5 8.5h6"/></svg>
<svg class="a" style="left:627.00px;top:96.80px" width="4" height="3" viewBox="0 0 4 3"><path d="M0.5 0.5 L3.5 0.5 L2 2.3z" fill="#bbb"/></svg>
<svg class="a" style="left:616.80px;top:108.10px" width="9" height="9" viewBox="0 0 9 9" fill="none" stroke="#bbb" stroke-width="0.8" stroke-linecap="round" stroke-linejoin="round"><rect x="1.5" y="1.5" width="6" height="5"/><path d="M1.5 8.5h6"/></svg>
<svg class="a" style="left:627.00px;top:111.40px" width="4" height="3" viewBox="0 0 4 3"><path d="M0.5 0.5 L3.5 0.5 L2 2.3z" fill="#bbb"/></svg>
<svg class="a" style="left:633.50px;top:117.80px" width="3" height="3" viewBox="0 0 3 3" fill="none" stroke="#bbb" stroke-width="0.6" stroke-linecap="round" stroke-linejoin="round"><path d="M0.5 0.5 L2.5 2.5 M2.5 0.5v2h-2"/></svg>
<div class="a" style="left:639px;top:90px;width:1px;height:29px;background:#e3e2e0"></div>
<svg class="a" style="left:643.00px;top:93.00px" width="10" height="10" viewBox="0 0 10 10" fill="none" stroke="#6a6a6a" stroke-width="0.8" stroke-linecap="round" stroke-linejoin="round"><circle cx="4.2" cy="4.2" r="3"/><path d="M6.5 6.5 L9 9"/></svg>
<span class="t" style="left:654.5px;top:96.40px;font-size:5.8px;color:#333;-webkit-text-stroke:0.12px #333;">查找</span>
<svg class="a" style="left:667.00px;top:96.80px" width="4" height="3" viewBox="0 0 4 3"><path d="M0.5 0.5 L3.5 0.5 L2 2.3z" fill="#666"/></svg>
<svg class="a" style="left:643.00px;top:107.60px" width="10" height="10" viewBox="0 0 10 10" fill="none" stroke="#6a6a6a" stroke-width="0.8" stroke-linecap="round" stroke-linejoin="round"><rect x="1" y="1.5" width="8" height="6.5" rx="0.5"/><path d="M5.5 5 L8.5 8.5" stroke="#7b9ede"/></svg>
<span class="t" style="left:654.5px;top:109.70px;font-size:5.8px;color:#333;-webkit-text-stroke:0.12px #333;">选择</span>
<svg class="a" style="left:667.00px;top:111.40px" width="4" height="3" viewBox="0 0 4 3"><path d="M0.5 0.5 L3.5 0.5 L2 2.3z" fill="#666"/></svg>
<div class="a" style="left:708px;top:134px;width:8px;height:1px;background:#777"></div>
<svg class="a" style="left:707.00px;top:144.30px" width="10" height="10" viewBox="0 0 10 10" fill="none" stroke="#666" stroke-width="0.8" stroke-linecap="round" stroke-linejoin="round"><path d="M1 3h8M1 7h8"/><circle cx="3.5" cy="3" r="1.2" fill="#efeeec"/><circle cx="6.5" cy="7" r="1.2" fill="#efeeec"/></svg>
<svg class="a" style="left:707.00px;top:163.40px" width="10" height="10" viewBox="0 0 10 10" fill="none" stroke="#666" stroke-width="0.8" stroke-linecap="round" stroke-linejoin="round"><path d="M5 1 L6.2 3.7 L9 4 L6.9 6 L7.5 8.8 L5 7.4 L2.5 8.8 L3.1 6 L1 4 L3.8 3.7z"/></svg>
<svg class="a" style="left:707.00px;top:182.00px" width="10" height="10" viewBox="0 0 10 10" fill="none" stroke="#666" stroke-width="0.8" stroke-linecap="round" stroke-linejoin="round"><rect x="1" y="1" width="5.5" height="5.5" rx="0.8"/><rect x="3.5" y="3.5" width="5.5" height="5.5" rx="0.8" fill="#efeeec"/></svg>
<svg class="a" style="left:707.00px;top:201.80px" width="10" height="10" viewBox="0 0 10 10" fill="none" stroke="#666" stroke-width="0.8" stroke-linecap="round" stroke-linejoin="round"><rect x="1" y="1" width="8" height="8" rx="1"/><path d="M2.5 7 L4.5 5 L6 6.5 L7.5 5"/></svg>
<svg class="a" style="left:707.00px;top:221.00px" width="10" height="10" viewBox="0 0 10 10" fill="none" stroke="#666" stroke-width="0.8" stroke-linecap="round" stroke-linejoin="round"><circle cx="3" cy="3" r="1.3"/><circle cx="7" cy="3" r="1.3"/><circle cx="3" cy="7" r="1.3"/><circle cx="7" cy="7" r="1.3"/><path d="M4 4 L6 6M6 4 L4 6"/></svg>
<svg class="a" style="left:707.00px;top:239.50px" width="10" height="10" viewBox="0 0 10 10" fill="none" stroke="#666" stroke-width="0.8" stroke-linecap="round" stroke-linejoin="round"><path d="M1 2h3.5l0.5 1 0.5-1h3.5v6.5h-3.5l-0.5 0.8-0.5-0.8h-3.5z"/><path d="M5 3v5.5"/></svg>
<svg class="a" style="left:707.00px;top:259.00px" width="10" height="10" viewBox="0 0 10 10" fill="none" stroke="#666" stroke-width="0.8" stroke-linecap="round" stroke-linejoin="round"><circle cx="5" cy="5" r="4"/><path d="M3.7 3.8 C3.7 2.5 6.3 2.5 6.3 3.8 C6.3 4.8 5 4.8 5 6"/><path d="M5 7.3v0.2"/></svg>
<svg class="a" style="left:707.00px;top:277.30px" width="10" height="10" viewBox="0 0 10 10" fill="none" stroke="#666" stroke-width="0.8" stroke-linecap="round" stroke-linejoin="round"><path d="M3.5 1 L1 2.5 L1.8 5 L3 4.6 V9 H7 V4.6 L8.2 5 L9 2.5 L6.5 1 C6 2 4 2 3.5 1z"/></svg>
<svg class="a" style="left:707.00px;top:301.00px" width="10" height="4" viewBox="0 0 10 4" fill="none" stroke="#555" stroke-width="0.3" stroke-linecap="round" stroke-linejoin="round"><circle cx="2" cy="2" r="0.9" fill="#555"/><circle cx="5" cy="2" r="0.9" fill="#555"/><circle cx="8" cy="2" r="0.9" fill="#555"/></svg><div class="a" style="left:36px;top:144px;width:110px;height:290px;overflow:hidden"><div class="a" style="left:-36px;top:-144px;width:200px;height:600px">
<span class="t" style="left:47.5px;top:153.40px;font-size:7px;color:#444;-webkit-text-stroke:0.12px #444;">2</span>
<svg class="a" style="left:45.50px;top:163.90px" width="8" height="8" viewBox="0 0 8 8" fill="none" stroke="#666" stroke-width="0.7" stroke-linecap="round" stroke-linejoin="round"><path d="M4 0.8 L5 3 L7.3 3.2 L5.5 4.7 L6 7 L4 5.8 L2 7 L2.5 4.7 L0.7 3.2 L3 3z"/></svg>
<div class="a" style="left:57px;top:150.4px;width:79.5px;height:43.8px;background:#fdfdfc;box-shadow:0 0.5px 1.5px rgba(0,0,0,.16);"></div>
<div class="a" style="left:61px;top:151.9px;width:17px;height:25px;border:0.5px solid #e2e2e2;background:#fcfcfc"></div>
<div class="a" style="left:78.5px;top:151.9px;width:17px;height:25px;border:0.5px solid #e2e2e2;background:#fbfbfb"></div>
<div class="a" style="left:63px;top:153px;width:12px;height:1px;background:#999"></div>
<div class="a" style="left:62px;top:156px;width:9px;height:1px;background:#dcdcdc"></div>
<div class="a" style="left:80px;top:154px;width:10px;height:1px;background:#dedede"></div>
<div class="a" style="left:62px;top:159px;width:13px;height:1px;background:#dcdcdc"></div>
<div class="a" style="left:80px;top:157px;width:14px;height:1px;background:#dedede"></div>
<div class="a" style="left:62px;top:161px;width:13px;height:1px;background:#dcdcdc"></div>
<div class="a" style="left:80px;top:159px;width:14px;height:1px;background:#dedede"></div>
<div class="a" style="left:62px;top:163px;width:9px;height:1px;background:#dcdcdc"></div>
<div class="a" style="left:80px;top:162px;width:14px;height:1px;background:#dedede"></div>
<div class="a" style="left:62px;top:166px;width:13px;height:1px;background:#dcdcdc"></div>
<div class="a" style="left:80px;top:164px;width:10px;height:1px;background:#dedede"></div>
<div class="a" style="left:62px;top:168px;width:13px;height:1px;background:#dcdcdc"></div>
<div class="a" style="left:80px;top:166px;width:14px;height:1px;background:#dedede"></div>
<div class="a" style="left:62px;top:170px;width:9px;height:1px;background:#dcdcdc"></div>
<div class="a" style="left:80px;top:169px;width:14px;height:1px;background:#dedede"></div>
<div class="a" style="left:62px;top:172px;width:13px;height:1px;background:#dcdcdc"></div>
<div class="a" style="left:80px;top:171px;width:14px;height:1px;background:#dedede"></div>
<div class="a" style="left:62px;top:175px;width:13px;height:1px;background:#dcdcdc"></div>
<div class="a" style="left:80px;top:174px;width:10px;height:1px;background:#dedede"></div>
<div class="a" style="left:68.5px;top:178.4px;width:19.0px;height:14.0px;background:#e6eaea"></div>
<div class="a" style="left:69.5px;top:180.9px;width:4px;height:4px;border-radius:50%;background:#d9684a"></div>
<div class="a" style="left:75px;top:181px;width:10px;height:1px;background:#8a8a8a"></div>
<div class="a" style="left:75px;top:184px;width:10px;height:1px;background:#9a9a9a"></div>
<div class="a" style="left:72px;top:188px;width:12px;height:1px;background:#b5b5b5"></div>
<div class="a" style="left:103px;top:152px;width:27px;height:1px;background:#b8b8b8"></div>
<div class="a" style="left:112px;top:154px;width:8px;height:1px;background:#b8b8b8"></div>
<div class="a" style="left:103px;top:158px;width:19px;height:1px;background:#dedede"></div>
<div class="a" style="left:103px;top:160px;width:27px;height:1px;background:#dedede"></div>
<div class="a" style="left:103px;top:163px;width:27px;height:1px;background:#dedede"></div>
<div class="a" style="left:103px;top:165px;width:27px;height:1px;background:#dedede"></div>
<div class="a" style="left:103px;top:168px;width:19px;height:1px;background:#dedede"></div>
<div class="a" style="left:103px;top:170px;width:27px;height:1px;background:#dedede"></div>
<div class="a" style="left:103px;top:173px;width:27px;height:1px;background:#dedede"></div>
<div class="a" style="left:103px;top:175px;width:27px;height:1px;background:#dedede"></div>
<div class="a" style="left:103px;top:178px;width:19px;height:1px;background:#dedede"></div>
<div class="a" style="left:103px;top:180px;width:27px;height:1px;background:#dedede"></div>
<div class="a" style="left:105px;top:184px;width:16px;height:1px;background:#e2e2e2"></div>
<div class="a" style="left:105px;top:187px;width:12px;height:1px;background:#e2e2e2"></div>
<div class="a" style="left:104px;top:191px;width:22px;height:1px;background:#e2a9a9"></div>
<div class="a" style="left:129px;top:191px;width:6px;height:1px;background:#d9a0a0"></div>
<span class="t" style="left:47.5px;top:205.50px;font-size:7px;color:#444;-webkit-text-stroke:0.12px #444;">3</span>
<svg class="a" style="left:45.50px;top:216.00px" width="8" height="8" viewBox="0 0 8 8" fill="none" stroke="#666" stroke-width="0.7" stroke-linecap="round" stroke-linejoin="round"><path d="M4 0.8 L5 3 L7.3 3.2 L5.5 4.7 L6 7 L4 5.8 L2 7 L2.5 4.7 L0.7 3.2 L3 3z"/></svg>
<div class="a" style="left:57px;top:202.5px;width:79.5px;height:43.8px;background:#fdfdfc;box-shadow:0 0.5px 1.5px rgba(0,0,0,.16);"></div>
<div class="a" style="left:62px;top:206px;width:20px;height:1px;background:#dedede"></div>
<div class="a" style="left:100px;top:206px;width:24px;height:1px;background:#dedede"></div>
<div class="a" style="left:62px;top:209px;width:26px;height:1px;background:#dedede"></div>
<div class="a" style="left:100px;top:209px;width:30px;height:1px;background:#dedede"></div>
<div class="a" style="left:62px;top:212px;width:26px;height:1px;background:#dedede"></div>
<div class="a" style="left:100px;top:212px;width:30px;height:1px;background:#dedede"></div>
<div class="a" style="left:62px;top:215px;width:20px;height:1px;background:#dedede"></div>
<div class="a" style="left:100px;top:215px;width:30px;height:1px;background:#dedede"></div>
<div class="a" style="left:62px;top:218px;width:26px;height:1px;background:#dedede"></div>
<div class="a" style="left:100px;top:218px;width:24px;height:1px;background:#dedede"></div>
<div class="a" style="left:62px;top:221px;width:26px;height:1px;background:#dedede"></div>
<div class="a" style="left:100px;top:221px;width:30px;height:1px;background:#dedede"></div>
<div class="a" style="left:62px;top:224px;width:20px;height:1px;background:#dedede"></div>
<div class="a" style="left:100px;top:224px;width:30px;height:1px;background:#dedede"></div>
<div class="a" style="left:62px;top:227px;width:26px;height:1px;background:#dedede"></div>
<div class="a" style="left:100px;top:227px;width:30px;height:1px;background:#dedede"></div>
<div class="a" style="left:62px;top:230px;width:26px;height:1px;background:#dedede"></div>
<div class="a" style="left:100px;top:230px;width:24px;height:1px;background:#dedede"></div>
<div class="a" style="left:62px;top:233px;width:20px;height:1px;background:#dedede"></div>
<div class="a" style="left:100px;top:233px;width:30px;height:1px;background:#dedede"></div>
<div class="a" style="left:62px;top:236px;width:26px;height:1px;background:#dedede"></div>
<div class="a" style="left:100px;top:236px;width:30px;height:1px;background:#dedede"></div>
<div class="a" style="left:62px;top:240px;width:26px;height:1px;background:#dedede"></div>
<div class="a" style="left:100px;top:240px;width:30px;height:1px;background:#dedede"></div>
<div class="a" style="left:62px;top:243px;width:20px;height:1px;background:#dedede"></div>
<div class="a" style="left:100px;top:243px;width:24px;height:1px;background:#dedede"></div>
<div class="a" style="left:62.0px;top:223.0px;width:7.0px;height:1.3px;background:#a9c1e6"></div>
<div class="a" style="left:100.0px;top:203.3px;width:7.0px;height:1.5px;background:#a9c1e6"></div>
<div class="a" style="left:128.0px;top:242.5px;width:5.0px;height:1.3px;background:#e1a9a9"></div>
<span class="t" style="left:47.5px;top:258.00px;font-size:7px;color:#444;-webkit-text-stroke:0.12px #444;">4</span>
<svg class="a" style="left:45.50px;top:268.50px" width="8" height="8" viewBox="0 0 8 8" fill="none" stroke="#666" stroke-width="0.7" stroke-linecap="round" stroke-linejoin="round"><path d="M4 0.8 L5 3 L7.3 3.2 L5.5 4.7 L6 7 L4 5.8 L2 7 L2.5 4.7 L0.7 3.2 L3 3z"/></svg>
<div class="a" style="left:57px;top:255px;width:79.5px;height:43.8px;background:#fdfdfc;box-shadow:0 0.5px 1.5px rgba(0,0,0,.16);"></div>
<div class="a" style="left:62px;top:258px;width:20px;height:1px;background:#dedede"></div>
<div class="a" style="left:100px;top:258px;width:24px;height:1px;background:#dedede"></div>
<div class="a" style="left:62px;top:261px;width:26px;height:1px;background:#dedede"></div>
<div class="a" style="left:100px;top:261px;width:30px;height:1px;background:#dedede"></div>
<div class="a" style="left:62px;top:264px;width:26px;height:1px;background:#dedede"></div>
<div class="a" style="left:100px;top:264px;width:30px;height:1px;background:#dedede"></div>
<div class="a" style="left:62px;top:267px;width:20px;height:1px;background:#dedede"></div>
<div class="a" style="left:100px;top:267px;width:30px;height:1px;background:#dedede"></div>
<div class="a" style="left:62px;top:270px;width:26px;height:1px;background:#dedede"></div>
<div class="a" style="left:100px;top:270px;width:24px;height:1px;background:#dedede"></div>
<div class="a" style="left:62px;top:274px;width:26px;height:1px;background:#dedede"></div>
<div class="a" style="left:100px;top:274px;width:30px;height:1px;background:#dedede"></div>
<div class="a" style="left:62px;top:277px;width:20px;height:1px;background:#dedede"></div>
<div class="a" style="left:100px;top:277px;width:30px;height:1px;background:#dedede"></div>
<div class="a" style="left:62px;top:280px;width:26px;height:1px;background:#dedede"></div>
<div class="a" style="left:100px;top:280px;width:30px;height:1px;background:#dedede"></div>
<div class="a" style="left:62px;top:283px;width:26px;height:1px;background:#dedede"></div>
<div class="a" style="left:100px;top:283px;width:24px;height:1px;background:#dedede"></div>
<div class="a" style="left:62px;top:286px;width:20px;height:1px;background:#dedede"></div>
<div class="a" style="left:100px;top:286px;width:30px;height:1px;background:#dedede"></div>
<div class="a" style="left:62px;top:289px;width:26px;height:1px;background:#dedede"></div>
<div class="a" style="left:100px;top:289px;width:30px;height:1px;background:#dedede"></div>
<div class="a" style="left:62px;top:292px;width:26px;height:1px;background:#dedede"></div>
<div class="a" style="left:100px;top:292px;width:30px;height:1px;background:#dedede"></div>
<div class="a" style="left:62px;top:295px;width:20px;height:1px;background:#dedede"></div>
<div class="a" style="left:100px;top:295px;width:24px;height:1px;background:#dedede"></div>
<div class="a" style="left:62.0px;top:266.0px;width:18.0px;height:1.5px;background:#a9c1e6"></div>
<div class="a" style="left:108.0px;top:295.5px;width:12.0px;height:2.0px;background:#5f95e3"></div>
<div class="a" style="left:100.0px;top:255.5px;width:6.0px;height:0.8px;background:#a9c1e6"></div>
<span class="t" style="left:47.5px;top:310.00px;font-size:7px;color:#d5651f;">5</span>
<svg class="a" style="left:45.50px;top:320.50px" width="8" height="8" viewBox="0 0 8 8" fill="none" stroke="#666" stroke-width="0.7" stroke-linecap="round" stroke-linejoin="round"><path d="M4 0.8 L5 3 L7.3 3.2 L5.5 4.7 L6 7 L4 5.8 L2 7 L2.5 4.7 L0.7 3.2 L3 3z"/></svg>
<div class="a" style="left:57px;top:307px;width:79.5px;height:43.8px;background:#f8f5f0;box-shadow:0 0.5px 1.5px rgba(0,0,0,.16);border:1.3px solid #e3a274;border-radius:1.5px;"></div>
<div class="a" style="left:60px;top:310px;width:14px;height:1px;background:#8d827a"></div>
<div class="a" style="left:60px;top:314px;width:22px;height:1px;background:#e0dad2"></div>
<div class="a" style="left:98px;top:310px;width:25px;height:1px;background:#e0dad2"></div>
<div class="a" style="left:60px;top:318px;width:28px;height:1px;background:#e0dad2"></div>
<div class="a" style="left:98px;top:313px;width:30px;height:1px;background:#e0dad2"></div>
<div class="a" style="left:60px;top:320px;width:28px;height:1px;background:#e0dad2"></div>
<div class="a" style="left:98px;top:316px;width:30px;height:1px;background:#e0dad2"></div>
<div class="a" style="left:60px;top:324px;width:22px;height:1px;background:#e0dad2"></div>
<div class="a" style="left:98px;top:320px;width:30px;height:1px;background:#e0dad2"></div>
<div class="a" style="left:60px;top:326px;width:28px;height:1px;background:#e0dad2"></div>
<div class="a" style="left:98px;top:323px;width:25px;height:1px;background:#e0dad2"></div>
<div class="a" style="left:60px;top:330px;width:28px;height:1px;background:#e0dad2"></div>
<div class="a" style="left:98px;top:326px;width:30px;height:1px;background:#e0dad2"></div>
<div class="a" style="left:60px;top:332px;width:22px;height:1px;background:#e0dad2"></div>
<div class="a" style="left:98px;top:329px;width:30px;height:1px;background:#e0dad2"></div>
<div class="a" style="left:60px;top:336px;width:28px;height:1px;background:#e0dad2"></div>
<div class="a" style="left:98px;top:332px;width:30px;height:1px;background:#e0dad2"></div>
<div class="a" style="left:60px;top:338px;width:28px;height:1px;background:#e0dad2"></div>
<div class="a" style="left:98px;top:336px;width:25px;height:1px;background:#e0dad2"></div>
<div class="a" style="left:60px;top:342px;width:22px;height:1px;background:#e0dad2"></div>
<div class="a" style="left:98px;top:339px;width:30px;height:1px;background:#e0dad2"></div>
<div class="a" style="left:60px;top:344px;width:28px;height:1px;background:#e0dad2"></div>
<div class="a" style="left:98px;top:342px;width:30px;height:1px;background:#e0dad2"></div>
<div class="a" style="left:60px;top:348px;width:28px;height:1px;background:#e0dad2"></div>
<div class="a" style="left:98px;top:345px;width:30px;height:1px;background:#e0dad2"></div>
<div class="a" style="left:95.5px;top:308.0px;width:0.6px;height:42.0px;background:#ece6dd"></div>
<span class="t" style="left:47.5px;top:362.50px;font-size:7px;color:#444;-webkit-text-stroke:0.12px #444;">6</span>
<svg class="a" style="left:45.50px;top:373.00px" width="8" height="8" viewBox="0 0 8 8" fill="none" stroke="#666" stroke-width="0.7" stroke-linecap="round" stroke-linejoin="round"><path d="M4 0.8 L5 3 L7.3 3.2 L5.5 4.7 L6 7 L4 5.8 L2 7 L2.5 4.7 L0.7 3.2 L3 3z"/></svg>
<div class="a" style="left:57px;top:359.5px;width:79.5px;height:43.8px;background:#f8f5f0;box-shadow:0 0.5px 1.5px rgba(0,0,0,.16);"></div>
<div class="a" style="left:61px;top:362px;width:24px;height:1px;background:#e0dad2"></div>
<div class="a" style="left:61px;top:366px;width:29px;height:1px;background:#e0dad2"></div>
<div class="a" style="left:61px;top:369px;width:29px;height:1px;background:#e0dad2"></div>
<div class="a" style="left:61px;top:372px;width:24px;height:1px;background:#e0dad2"></div>
<div class="a" style="left:61px;top:375px;width:29px;height:1px;background:#e0dad2"></div>
<div class="a" style="left:61px;top:378px;width:29px;height:1px;background:#e0dad2"></div>
<div class="a" style="left:61px;top:382px;width:24px;height:1px;background:#e0dad2"></div>
<div class="a" style="left:61px;top:385px;width:29px;height:1px;background:#e0dad2"></div>
<div class="a" style="left:61px;top:388px;width:29px;height:1px;background:#e0dad2"></div>
<div class="a" style="left:61px;top:391px;width:24px;height:1px;background:#e0dad2"></div>
<div class="a" style="left:61px;top:394px;width:29px;height:1px;background:#e0dad2"></div>
<div class="a" style="left:61px;top:398px;width:29px;height:1px;background:#e0dad2"></div>
<div class="a" style="left:61px;top:401px;width:24px;height:1px;background:#e0dad2"></div>
<div class="a" style="left:100px;top:364px;width:25px;height:1px;background:#e0dad2"></div>
<div class="a" style="left:100px;top:367px;width:31px;height:1px;background:#e0dad2"></div>
<div class="a" style="left:100px;top:370px;width:31px;height:1px;background:#e0dad2"></div>
<div class="a" style="left:100px;top:373px;width:25px;height:1px;background:#e0dad2"></div>
<div class="a" style="left:100px;top:377px;width:31px;height:1px;background:#e0dad2"></div>
<div class="a" style="left:100px;top:380px;width:31px;height:1px;background:#e0dad2"></div>
<div class="a" style="left:100px;top:383px;width:25px;height:1px;background:#e0dad2"></div>
<div class="a" style="left:100px;top:387px;width:31px;height:1px;background:#e0dad2"></div>
<div class="a" style="left:96.0px;top:360.5px;width:0.6px;height:42.0px;background:#e8e2d9"></div>
<div class="a" style="left:118px;top:402px;width:8px;height:1px;background:#c8c8c8"></div>
<span class="t" style="left:47.5px;top:415.00px;font-size:7px;color:#444;-webkit-text-stroke:0.12px #444;">7</span>
<svg class="a" style="left:45.50px;top:425.50px" width="8" height="8" viewBox="0 0 8 8" fill="none" stroke="#666" stroke-width="0.7" stroke-linecap="round" stroke-linejoin="round"><path d="M4 0.8 L5 3 L7.3 3.2 L5.5 4.7 L6 7 L4 5.8 L2 7 L2.5 4.7 L0.7 3.2 L3 3z"/></svg>
<div class="a" style="left:57px;top:412px;width:79.5px;height:43.8px;background:#fdfdfc;box-shadow:0 0.5px 1.5px rgba(0,0,0,.16);"></div>
<div class="a" style="left:70px;top:415px;width:5px;height:5px;border-radius:50%;border:0.8px solid #b04a4a"></div>
<div class="a" style="left:76px;top:415.5px;width:3.5px;height:3px;background:#c56a6a;border-radius:1px"></div>
<div class="a" style="left:81px;top:415.5px;width:3.5px;height:3px;background:#c56a6a;border-radius:1px"></div>
<div class="a" style="left:86px;top:415.5px;width:3.5px;height:3px;background:#c56a6a;border-radius:1px"></div>
<div class="a" style="left:91px;top:415.5px;width:3.5px;height:3px;background:#c56a6a;border-radius:1px"></div>
<div class="a" style="left:96px;top:415.5px;width:3.5px;height:3px;background:#c56a6a;border-radius:1px"></div>
<div class="a" style="left:101px;top:415.5px;width:3.5px;height:3px;background:#c56a6a;border-radius:1px"></div>
<div class="a" style="left:106px;top:415.5px;width:3.5px;height:3px;background:#c56a6a;border-radius:1px"></div>
<div class="a" style="left:111px;top:415.5px;width:3.5px;height:3px;background:#c56a6a;border-radius:1px"></div>
<div class="a" style="left:78px;top:420px;width:36px;height:1px;background:#e3c8c8"></div>
<div class="a" style="left:90px;top:425px;width:20px;height:20px;border-radius:50%;border:1.2px solid #3a3a3a;border-bottom-color:transparent;border-left-color:transparent;transform:rotate(-45deg)"></div>
<span class="t" style="left:75px;top:430.25px;font-size:8.5px;color:#a83b30;letter-spacing:0.1px"><b>THANKS</b></span>
</div></div>
<svg class="a" style="left:89.70px;top:439.30px" width="8" height="8" viewBox="0 0 8 8" fill="none" stroke="#444" stroke-width="1.0" stroke-linecap="round" stroke-linejoin="round"><path d="M4 0.8v6.4M0.8 4h6.4"/></svg><div class="a" style="left:36px;top:458.5px;width:23.5px;height:6.5px;background:#000"></div>
<span class="t" style="left:12.5px;top:458.85px;font-size:5.9px;color:#f5f5f5;letter-spacing:-0.02px;-webkit-text-stroke:0.15px #f5f5f5">李老师的共享屏幕</span>
<span class="t" style="left:60.5px;top:458.50px;font-size:6.6px;color:#444;-webkit-text-stroke:0.12px #444;">5 / 7</span>
<div class="a" style="left:77px;top:458px;width:1px;height:7px;background:#dddcda"></div>
<svg class="a" style="left:84.00px;top:457.80px" width="8" height="8" viewBox="0 0 8 8" fill="none" stroke="#666" stroke-width="0.7" stroke-linecap="round" stroke-linejoin="round"><path d="M1.5 2 L3 1 H5 L6.5 2 L6 3.5 L5.5 3.3 V7 H2.5 V3.3 L2 3.5z"/></svg>
<span class="t" style="left:93.5px;top:458.50px;font-size:6.6px;color:#333;-webkit-text-stroke:0.12px #333;">Office 主题</span>
<div class="a" style="left:130px;top:458px;width:1px;height:7px;background:#dddcda"></div>
<svg class="a" style="left:137.70px;top:458.80px" width="6" height="6" viewBox="0 0 6 6" fill="none" stroke="#f2b705" stroke-width="0.4" stroke-linecap="round" stroke-linejoin="round"><path d="M3 0.8 L5.4 5.2 H0.6z" fill="#f2b705" stroke="#f2b705"/></svg>
<span class="t" style="left:147.5px;top:459.00px;font-size:5.6px;color:#333;-webkit-text-stroke:0.12px #333;letter-spacing:0.1px">缺失字体</span>
<svg class="a" style="left:390.00px;top:457.80px" width="8" height="8" viewBox="0 0 8 8" fill="none" stroke="#666" stroke-width="0.7" stroke-linecap="round" stroke-linejoin="round"><circle cx="4" cy="4" r="3"/><path d="M2.8 4 L3.7 5 L5.3 3"/></svg>
<span class="t" style="left:400px;top:458.90px;font-size:5.8px;color:#444;-webkit-text-stroke:0.12px #444;">智能美化</span>
<svg class="a" style="left:425.00px;top:460.60px" width="4" height="3" viewBox="0 0 4 3"><path d="M0.5 0.5 L3.5 0.5 L2 2.3z" fill="#666"/></svg>
<div class="a" style="left:436px;top:458px;width:1px;height:7px;background:#dddcda"></div>
<div class="a" style="left:443px;top:458px;width:6px;height:1px;background:#777"></div><div class="a" style="left:443px;top:461px;width:6px;height:1px;background:#777"></div><div class="a" style="left:443px;top:464px;width:6px;height:1px;background:#777"></div>
<span class="t" style="left:451.7px;top:458.90px;font-size:5.8px;color:#444;-webkit-text-stroke:0.12px #444;">备注</span>
<svg class="a" style="left:466.00px;top:460.60px" width="4" height="3" viewBox="0 0 4 3"><path d="M0.5 0.5 L3.5 0.5 L2 2.3z" fill="#666"/></svg>
<svg class="a" style="left:478.50px;top:457.80px" width="8" height="8" viewBox="0 0 8 8" fill="none" stroke="#666" stroke-width="0.7" stroke-linecap="round" stroke-linejoin="round"><path d="M1.5 1.5h5v4h-3l-2 1.5z"/></svg>
<span class="t" style="left:489.5px;top:458.90px;font-size:5.8px;color:#444;-webkit-text-stroke:0.12px #444;">批注</span>
<div class="a" style="left:508px;top:458px;width:1px;height:7px;background:#dddcda"></div>
<div class="a" style="left:511.5px;top:457px;width:11px;height:9.5px;background:#dcdbd8"></div>
<svg class="a" style="left:513.00px;top:457.80px" width="8" height="8" viewBox="0 0 8 8" fill="none" stroke="#555" stroke-width="0.7" stroke-linecap="round" stroke-linejoin="round"><rect x="1" y="1.5" width="6" height="5"/><path d="M3 1.5v5"/></svg>
<svg class="a" style="left:528.60px;top:457.80px" width="8" height="8" viewBox="0 0 8 8" fill="none" stroke="#555" stroke-width="0.7" stroke-linecap="round" stroke-linejoin="round"><rect x="1" y="1" width="2.5" height="2.5"/><rect x="4.5" y="1" width="2.5" height="2.5"/><rect x="1" y="4.5" width="2.5" height="2.5"/><rect x="4.5" y="4.5" width="2.5" height="2.5"/></svg>
<svg class="a" style="left:544.00px;top:457.80px" width="8" height="8" viewBox="0 0 8 8" fill="none" stroke="#555" stroke-width="0.7" stroke-linecap="round" stroke-linejoin="round"><path d="M1 1.5h6v5h-2.5l-0.5 1-0.5-1h-2.5z"/></svg>
<div class="a" style="left:555.5px;top:458px;width:1px;height:7px;background:#dddcda"></div>
<div class="a" style="left:563px;top:457px;width:10px;height:9.5px;background:#e8772e;border-radius:1px"></div>
<svg class="a" style="left:565.00px;top:458.80px" width="6" height="6" viewBox="0 0 6 6" fill="none" stroke="#fff" stroke-width="0.6" stroke-linecap="round" stroke-linejoin="round"><path d="M2 1.3 L4.5 3 L2 4.7z" fill="#fff"/></svg>
<svg class="a" style="left:576.50px;top:460.60px" width="4" height="3" viewBox="0 0 4 3"><path d="M0.5 0.5 L3.5 0.5 L2 2.3z" fill="#666"/></svg>
<div class="a" style="left:588px;top:458px;width:1px;height:7px;background:#dddcda"></div>
<svg class="a" style="left:592.00px;top:457.80px" width="8" height="8" viewBox="0 0 8 8" fill="none" stroke="#555" stroke-width="0.7" stroke-linecap="round" stroke-linejoin="round"><path d="M1 2.5v-1.5h1.5M5.5 1h1.5v1.5M7 5.5v1.5h-1.5M2.5 7h-1.5v-1.5"/><rect x="2.8" y="2.8" width="2.4" height="2.4"/></svg>
<span class="t" style="left:608.5px;top:458.80px;font-size:6px;color:#444;-webkit-text-stroke:0.12px #444;">114%</span>
<svg class="a" style="left:629.00px;top:460.60px" width="4" height="3" viewBox="0 0 4 3"><path d="M0.5 0.5 L3.5 0.5 L2 2.3z" fill="#666"/></svg>
<div class="a" style="left:641px;top:461.5px;width:5px;height:1px;background:#444"></div>
<div class="a" style="left:654px;top:461.3px;width:26px;height:1.2px;background:#3c6fd4"></div>
<div class="a" style="left:680px;top:461.5px;width:24px;height:0.8px;background:#c8c8c8"></div>
<div class="a" style="left:678.5px;top:459.8px;width:3px;height:3.5px;background:#555;border-radius:1px"></div>
<span class="t" style="left:711.5px;top:457.80px;font-size:8px;color:#444;-webkit-text-stroke:0.12px #444;">+</span>

</body></html>
